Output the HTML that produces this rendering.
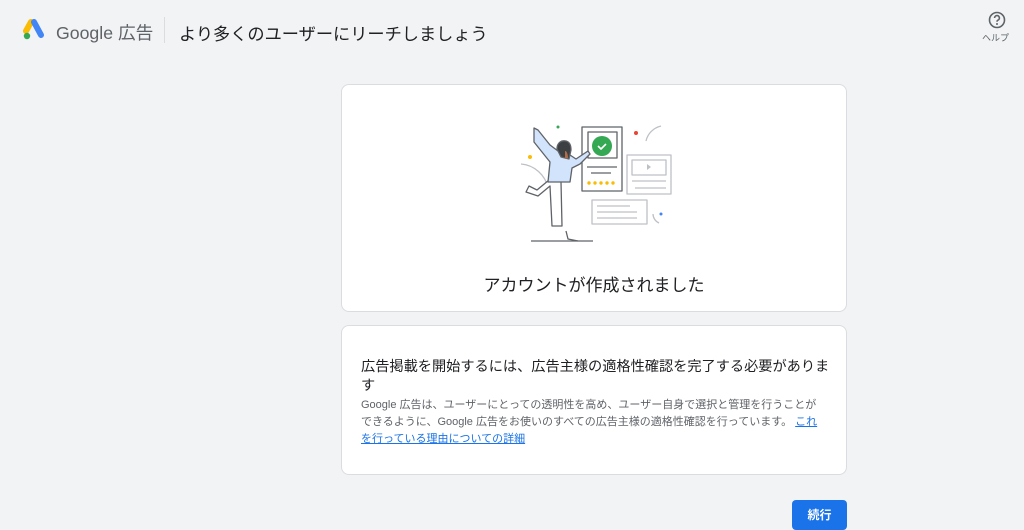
<!DOCTYPE html>
<html><head><meta charset="utf-8"><style>
body{margin:0;width:1024px;height:523px;background:#f1f3f4;font-family:"Liberation Sans","Noto Sans CJK JP",sans-serif;position:relative;overflow:hidden;color:#3c4043}
.abs{position:absolute}
.card{position:absolute;left:341px;width:506px;background:#fff;border:1px solid #dadce0;border-radius:8px;box-sizing:border-box}
</style></head><body>
<svg class="abs" style="left:22px;top:19px" width="25" height="22" viewBox="0 0 25 22">
<path d="M9 3 L4 12" stroke="#fbbc04" stroke-width="6" stroke-linecap="round"/>
<path d="M12 3 L19 16" stroke="#4285f4" stroke-width="6" stroke-linecap="round"/>
<circle cx="5" cy="17" r="3.2" fill="#34a853"/>
</svg>
<div class="abs" style="left:56px;top:19px;font-size:17.7px;color:#5f6368">Google 広告</div>
<div class="abs" style="left:164px;top:17px;width:1px;height:26px;background:#dadce0"></div>
<div class="abs" style="left:179px;top:20px;font-size:17.2px;color:#202124">より多くのユーザーにリーチしましょう</div>
<svg class="abs" style="left:988px;top:11px" width="18" height="18" viewBox="0 0 18 18"><circle cx="9" cy="9" r="7.5" fill="none" stroke="#5f6368" stroke-width="1.6"/><path d="M6.6 7a2.4 2.4 0 1 1 3.2 2.2c-.7.3-.8.8-.8 1.5" fill="none" stroke="#5f6368" stroke-width="1.6"/><circle cx="9" cy="13" r="1" fill="#5f6368"/></svg>
<div class="abs" style="left:982px;top:31px;font-size:9px;color:#5f6368">ヘルプ</div>

<div class="card" style="top:84px;height:228px">
<svg class="abs" style="left:159px;top:26px" width="190" height="140" viewBox="500 110 190 140" fill="none" stroke="#5f6368" stroke-width="1.3" stroke-linejoin="round">
<rect x="581" y="126" width="40" height="64" fill="#fff"/>
<rect x="587" y="131" width="29" height="26"/>
<circle cx="601" cy="145" r="10" fill="#34a853" stroke="none"/>
<path d="M597 145l3 3 5-5" stroke="#fff" stroke-width="1.6"/>
<path d="M586 166h30M590 172h20"/>
<g fill="#fbbc04" stroke="none"><circle cx="588" cy="182" r="1.7"/><circle cx="594" cy="182" r="1.7"/><circle cx="600" cy="182" r="1.7"/><circle cx="606" cy="182" r="1.7"/><circle cx="612" cy="182" r="1.7"/></g>
<rect x="626" y="154" width="44" height="39" fill="#fff" stroke="#bdc1c6"/>
<rect x="631" y="159" width="34" height="15" stroke="#bdc1c6"/>
<path d="M646 163v6l4-3z" fill="#bdc1c6" stroke="none"/>
<path d="M631 180h34M634 187h31" stroke="#bdc1c6"/>
<rect x="591" y="199" width="55" height="24" fill="#fff" stroke="#bdc1c6"/>
<path d="M596 205h33M596 211h40M596 217h40" stroke="#bdc1c6"/>
<path d="M645 140a20 20 0 0 1 15-15M652 213a10 10 0 0 0 6 9M520 163a30 30 0 0 1 27 24" stroke="#bdc1c6"/>
<circle cx="557" cy="126" r="1.5" fill="#34a853" stroke="none"/>
<circle cx="635" cy="132" r="2" fill="#ea4335" stroke="none"/>
<circle cx="529" cy="156" r="2" fill="#fbbc04" stroke="none"/>
<circle cx="660" cy="213" r="1.5" fill="#4285f4" stroke="none"/>
<path d="M548 179l-12 10-8-4-3 6 12 4 12-10 2 40h10l-1-44z" fill="#fff"/>
<path d="M533 127l4 2 12 15 8 6 12 4 6 4 12-8 2 3-10 10-8 4-2 14h-22l2-20-16-20z" fill="#d2e3fc"/>
<path d="M556 148c0-6 4-9 9-8 4 1 5 5 5 9l-2 9-8-2z" fill="#3c4043"/>
<path d="M564 150c2 0 3 4 3 7l-3 1z" fill="#b06c49" stroke="none"/>
<path d="M565 230l2 8 10 2" />
<path d="M530 240h62"/>
</svg>
<div class="abs" style="left:0;width:100%;top:186px;text-align:center;font-size:17px;color:#202124">アカウントが作成されました</div>
</div>

<div class="card" style="top:325px;height:150px">
<div class="abs" style="left:19px;top:32px;width:475px;font-size:14.2px;line-height:19px;color:#202124">広告掲載を開始するには、広告主様の適格性確認を完了する必要があります</div>
<div class="abs" style="left:19px;top:71px;width:466px;font-size:11px;line-height:17px;color:#5f6368">Google 広告は、ユーザーにとっての透明性を高め、ユーザー自身で選択と管理を行うことができるように、Google 広告をお使いのすべての広告主様の適格性確認を行っています。 <span style="color:#1a73e8;text-decoration:underline">これを行っている理由についての詳細</span></div>
</div>

<div class="abs" style="left:792px;top:500px;width:55px;height:30px;background:#1a73e8;border-radius:4px;color:#fff;font-size:12px;font-weight:bold;text-align:center;line-height:30px">続行</div>
</body></html>
